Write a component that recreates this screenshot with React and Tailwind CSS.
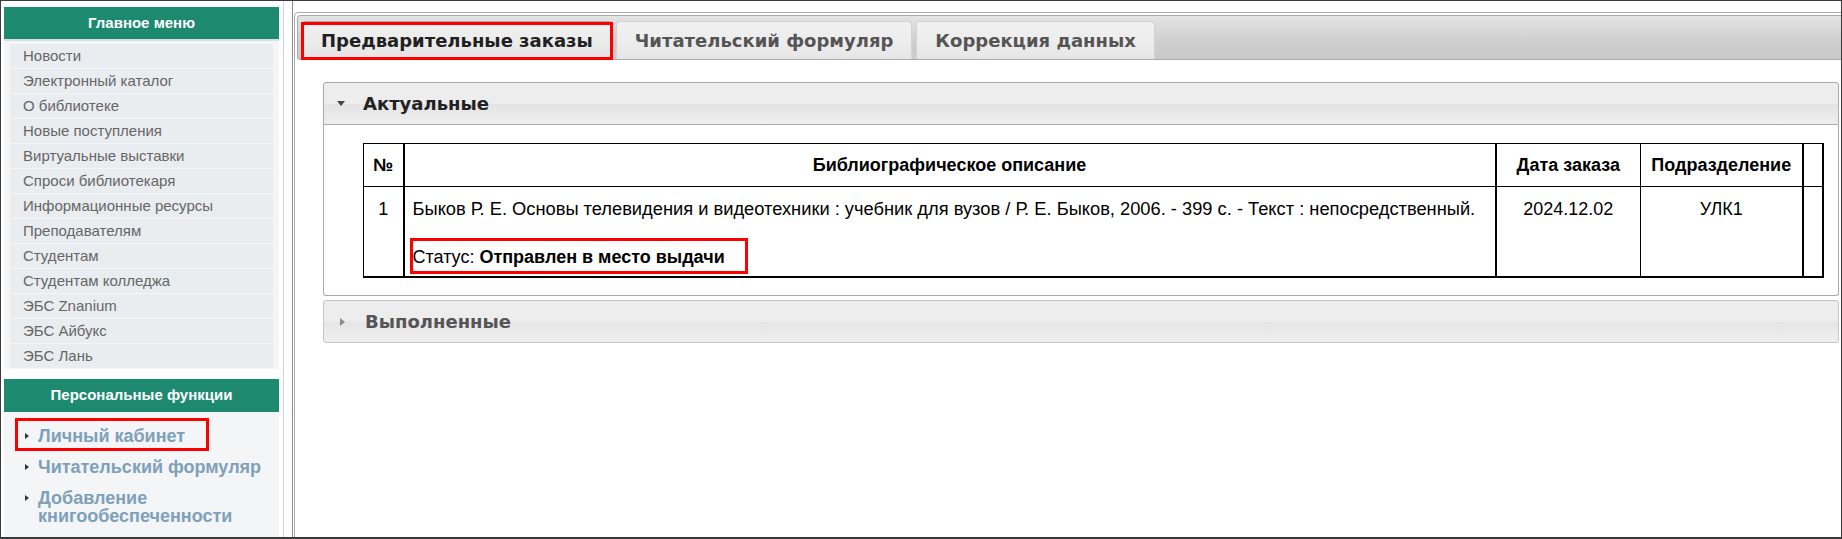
import React from 'react';

const mainMenu = [
  'Новости',
  'Электронный каталог',
  'О библиотеке',
  'Новые поступления',
  'Виртуальные выставки',
  'Спроси библиотекаря',
  'Информационные ресурсы',
  'Преподавателям',
  'Студентам',
  'Студентам колледжа',
  'ЭБС Znanium',
  'ЭБС Айбукс',
  'ЭБС Лань',
];

const personal = [
  { label: 'Личный кабинет', marked: true },
  { label: 'Читательский формуляр' },
  { label: 'Добавление книгообеспеченности' },
];

const tabs = [
  { label: 'Предварительные заказы', active: true },
  { label: 'Читательский формуляр' },
  { label: 'Коррекция данных' },
];

function Bullet() {
  return (
    <svg width="6" height="8" viewBox="0 0 6 8" className="shrink-0">
      <path d="M1 1 L5 4 L1 7 Z" fill="#333" />
    </svg>
  );
}

function Sidebar() {
  return (
    <aside className="w-[283px] shrink-0 border-r border-[#d4d4d4] pl-[3px] pt-[6px] flex flex-col">
      {/* ГЛАВНОЕ МЕНЮ */}
      <div className="w-[275px]">
        <div className="h-[32px] bg-[#1d8a6f] flex items-center justify-center text-white font-bold text-[15px]">
          Главное меню
        </div>
        <div className="h-[2px] bg-[#d9e0e3]" />
        <div className="bg-[#f3f5f7] px-[6px] pt-[3px] pb-[1px] flex flex-col gap-[1px]">
          {mainMenu.map((item) => (
            <div key={item} className="h-[24px] bg-[#eaedf0] pl-[13px] flex items-center text-[15px] text-[#666]">
              {item}
            </div>
          ))}
        </div>
      </div>

      {/* ПЕРСОНАЛЬНЫЕ ФУНКЦИИ */}
      <div className="w-[275px] mt-[10px] flex-1 flex flex-col">
        <div className="h-[33px] bg-[#1d8a6f] flex items-center justify-center text-white font-bold text-[15px]">
          Персональные функции
        </div>
        <div className="flex-1 bg-[#f3f5f7] pt-[15px] pl-[20px] flex flex-col gap-[13px]">
          {personal.map((item) => (
            <div key={item.label} className="relative flex items-start gap-[8px]">
              <span className="h-[18px] flex items-center"><Bullet /></span>
              <span className="font-bold text-[18px] leading-[18px] text-[#7ea0b8] w-[235px]">{item.label}</span>
              {item.marked && (
                <span className="absolute left-[-9px] top-[-9px] w-[194px] h-[33px] border-[3px] border-[#f00]" />
              )}
            </div>
          ))}
        </div>
      </div>
    </aside>
  );
}

function OrdersTable() {
  return (
    <table className="table-fixed border-collapse w-[1459px] text-[18px] text-black">
      <thead>
        <tr className="h-[43px]">
          <th className="w-[40px] border border-black border-r-2 font-bold">№</th>
          <th className="w-[1092px] border border-black border-r-2 font-bold">Библиографическое описание</th>
          <th className="w-[145px] border border-black font-bold">Дата заказа</th>
          <th className="w-[162px] border border-black border-r-2 font-bold">Подразделение</th>
          <th className="w-[20px] border border-black border-r-2" />
        </tr>
      </thead>
      <tbody>
        <tr className="h-[90px] align-top">
          <td className="border border-black border-b-2 border-r-2 text-center pt-[10px] leading-[24px]">1</td>
          <td className="border border-black border-b-2 border-r-2 px-[8px] pt-[10px] leading-[24px]">
            <div className="text-[18.3px]">
              Быков Р. Е. Основы телевидения и видеотехники : учебник для вузов / Р. Е. Быков, 2006. - 399 с. - Текст : непосредственный.
            </div>
            <div className="mt-[24px] relative">
              Статус: <b>Отправлен в место выдачи</b>
              <span className="absolute left-[-3px] top-[-7px] w-[338px] h-[36px] border-[3px] border-[#f00]" />
            </div>
          </td>
          <td className="border border-black border-b-2 text-center pt-[10px] leading-[24px]">2024.12.02</td>
          <td className="border border-black border-b-2 border-r-2 text-center pt-[10px] leading-[24px]">УЛК1</td>
          <td className="border border-black border-b-2 border-r-2" />
        </tr>
      </tbody>
    </table>
  );
}

export default function App() {
  return (
    <div className="w-[1842px] h-[539px] overflow-hidden bg-white border border-b-2 border-[#3a3a3a] flex font-['Liberation_Sans',Arial,sans-serif]">
      <Sidebar />
      <div className="w-[8px] shrink-0" />

      {/* MAIN */}
      <main className="flex-1 border-l border-[#8a8a8a] pt-[11px] pl-[1px] overflow-hidden">
        <div className="w-[1570px] h-[600px] border border-[#aaa] rounded-[4px] p-[2px] font-['DejaVu_Sans',Verdana,sans-serif]">
          {/* TABS */}
          <div className="h-[45px] border border-[#aaa] rounded-[3px] bg-[linear-gradient(to_bottom,#e4e4e4_0%,#cdcdcd_65%,#cbcbcb_100%)] flex items-end pl-[4px] gap-[4px]">
            {tabs.map((t) => (
              <div
                key={t.label}
                className={`relative h-[38px] px-[18px] flex items-center border border-b-0 rounded-t-[3px] font-bold text-[18px] ${
                  t.active
                    ? 'border-[#aaa] bg-[linear-gradient(to_bottom,#f0f0f0_0%,#ececec_50%,#e4e4e4_100%)] text-[#212121]'
                    : 'border-[#d3d3d3] bg-[linear-gradient(to_bottom,#f0f0f0_0%,#ededed_50%,#e6e6e6_100%)] text-[#555]'
                }`}
              >
                {t.label}
                {t.active && (
                  <span className="absolute left-[-2px] right-[-2px] top-0 h-[38px] border-[3px] border-[#f00]" />
                )}
              </div>
            ))}
          </div>

          {/* PANEL */}
          <div className="pt-[22px] pl-[26px] pr-[22px]">
            {/* Актуальные */}
            <div className="h-[43px] border border-[#aaa] rounded-t-[3px] bg-[linear-gradient(to_bottom,#ededed_0%,#ededed_50%,#e3e3e3_52%,#efefef_100%)] flex items-center">
              <svg width="8" height="5" viewBox="0 0 8 5" className="ml-[13px]">
                <path d="M0 0 L8 0 L4 5 Z" fill="#454545" />
              </svg>
              <span className="ml-[18px] font-bold text-[18px] text-[#222]">Актуальные</span>
            </div>
            <div className="h-[171px] border border-t-0 border-[#aaa] rounded-b-[3px] bg-white pt-[18px] pl-[39px] font-['Liberation_Sans',Arial,sans-serif]">
              <OrdersTable />
            </div>

            {/* Выполненные */}
            <div className="mt-[4px] h-[43px] border border-[#c5c5c5] rounded-[3px] bg-[linear-gradient(to_bottom,#ededed_0%,#ededed_50%,#e5e5e5_52%,#efefef_100%)] flex items-center">
              <svg width="5" height="8" viewBox="0 0 5 8" className="ml-[16px]">
                <path d="M0 0 L5 4 L0 8 Z" fill="#8a8a8a" />
              </svg>
              <span className="ml-[20px] font-bold text-[18px] text-[#555]">Выполненные</span>
            </div>
          </div>
        </div>
      </main>
    </div>
  );
}
